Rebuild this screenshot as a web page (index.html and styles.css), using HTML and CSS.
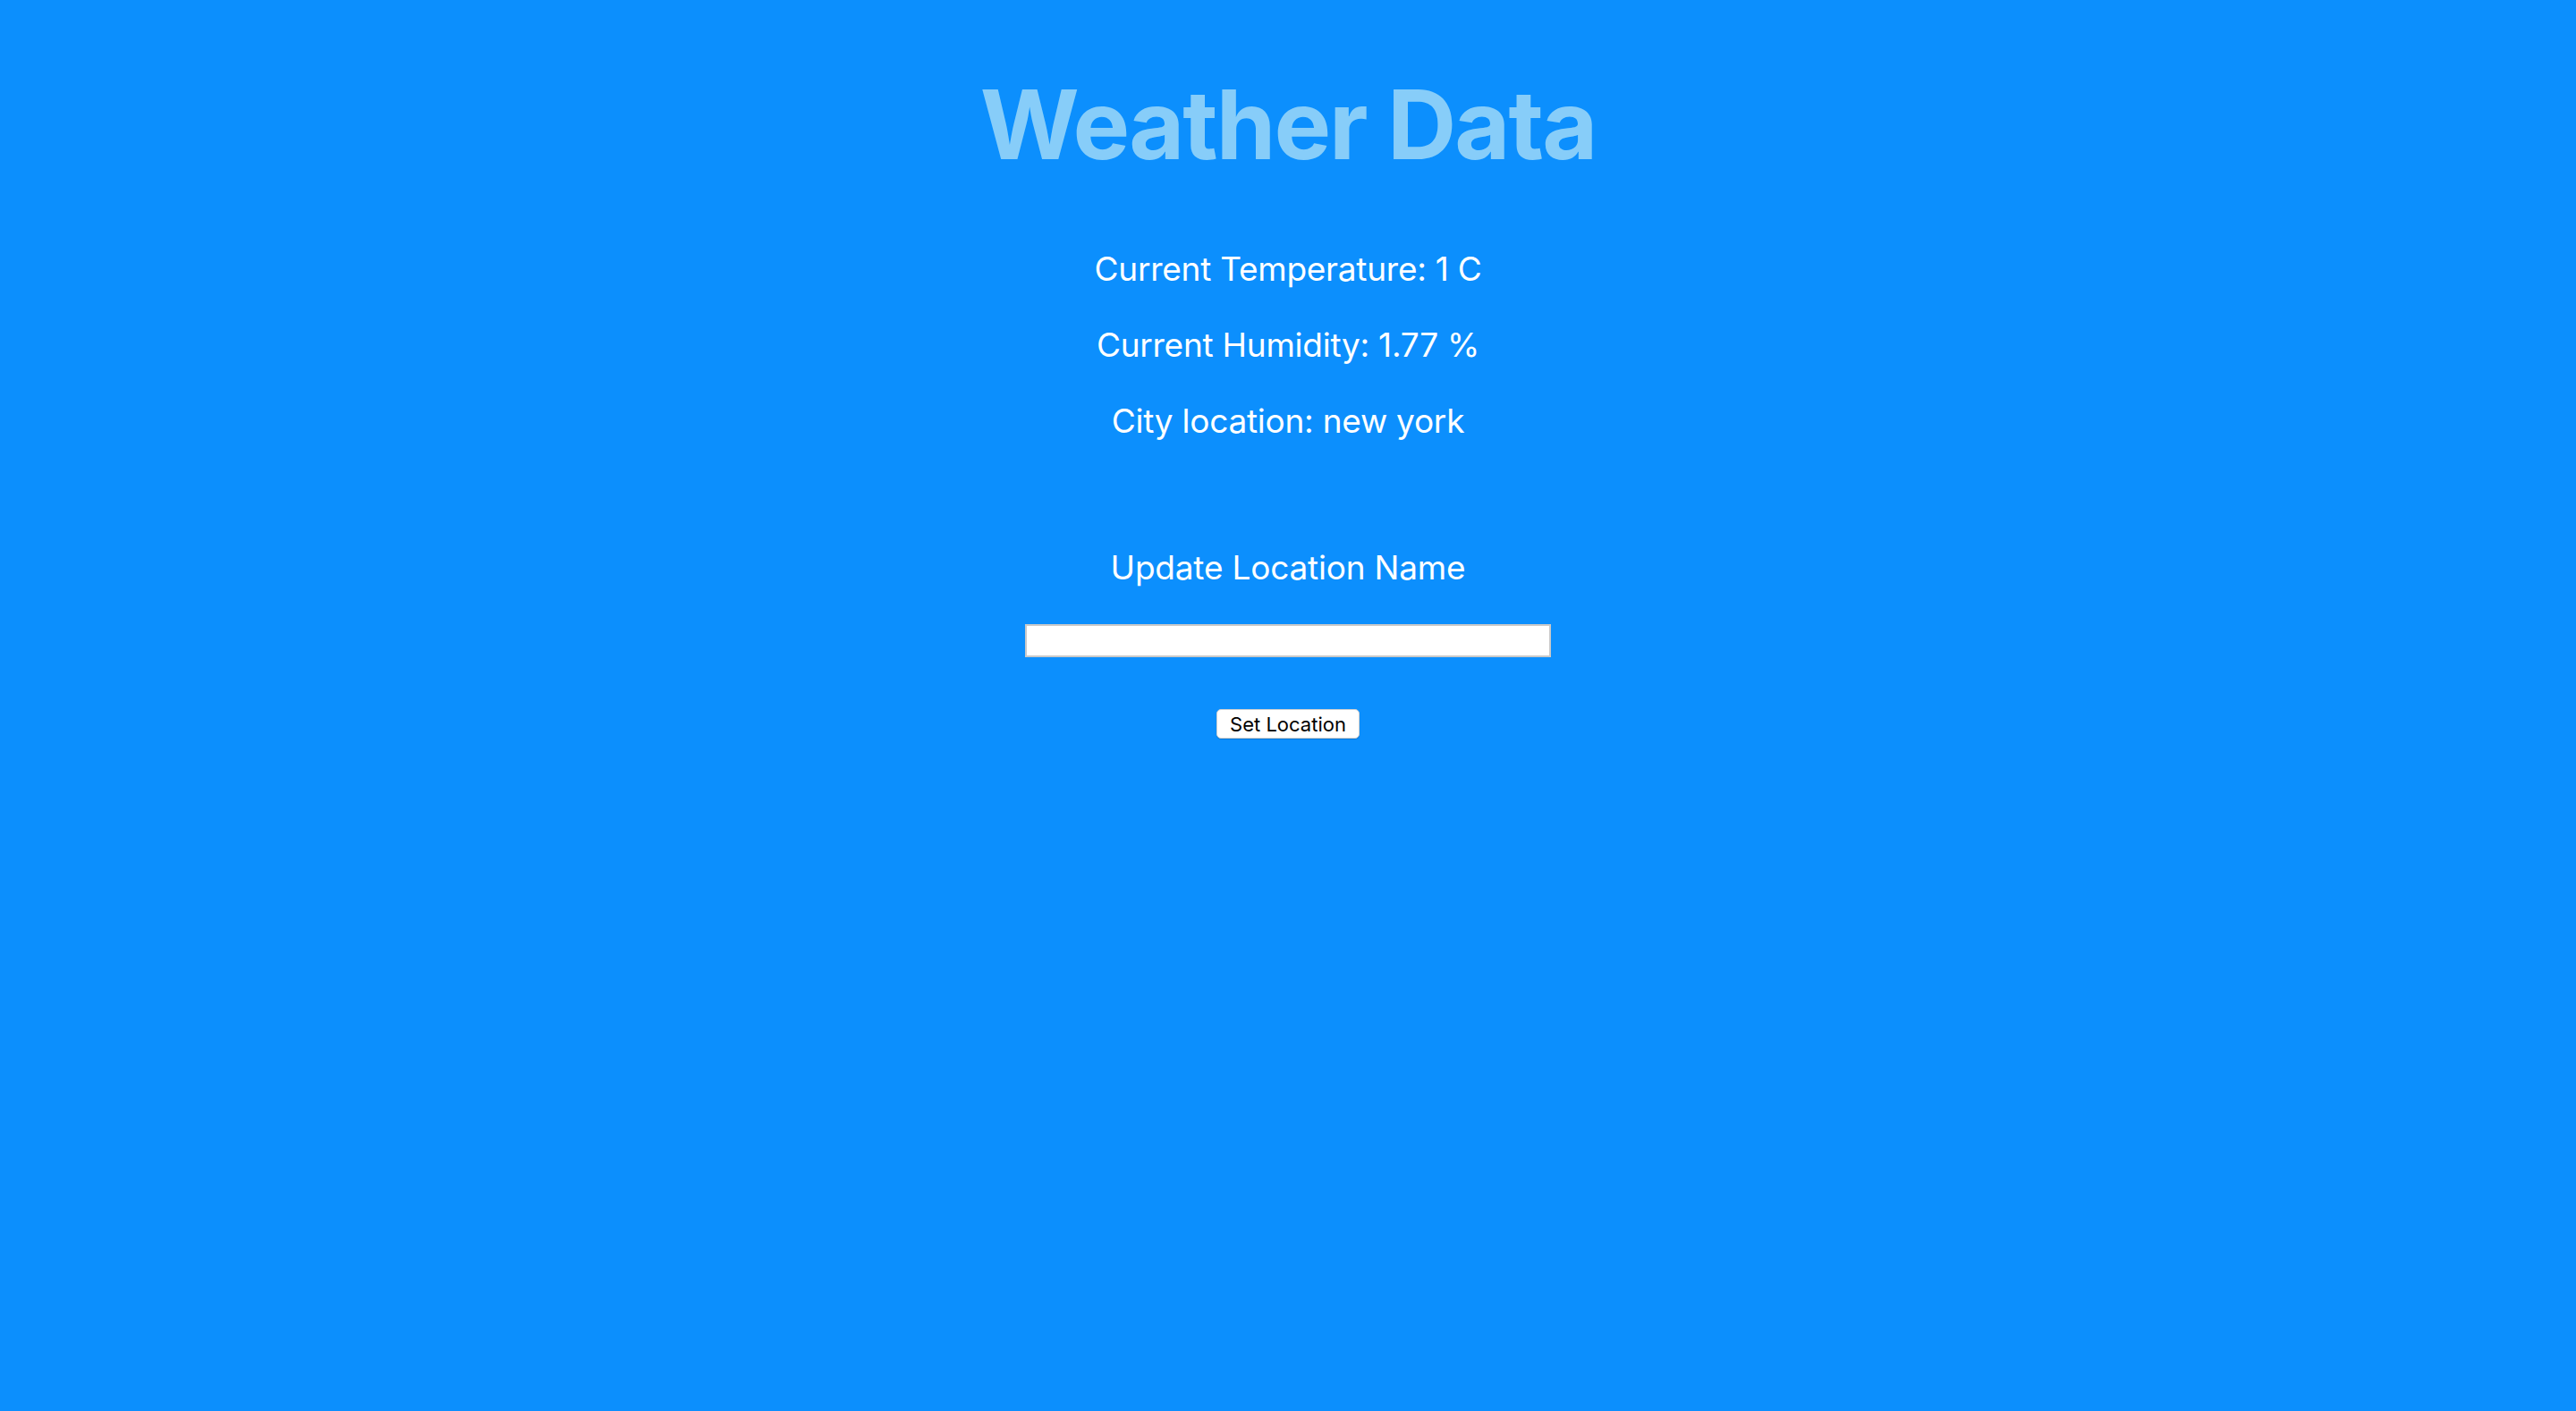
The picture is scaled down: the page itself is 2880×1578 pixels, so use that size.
FILE: index.html
```html
<!DOCTYPE html>
<html lang="en">
<head>
<meta charset="utf-8">
<title>Weather Data</title>
<link rel="stylesheet" href="styles.css">
</head>
<body>
<main class="page">
  <h1 class="title">Weather Data</h1>
  <p class="reading reading-first">Current Temperature: 1 C</p>
  <p class="reading">Current Humidity: 1.77 %</p>
  <p class="reading">City location: new york</p>
  <h2 class="update-title">Update Location Name</h2>
  <input class="location-input" type="text" aria-label="Location name">
  <button class="set-button" type="button">Set Location</button>
</main>
</body>
</html>
```
FILE: styles.css
```css
html, body {
  margin: 0;
  padding: 0;
  background: #0c8ffd;
  min-height: 100%;
}
body {
  min-height: 1578px;
  font-family: Inter, "Noto Sans", sans-serif;
  color: #ffffff;
}
.page {
  display: flex;
  flex-direction: column;
  align-items: center;
  padding-top: 86px;
}
.title {
  margin: 0;
  font-size: 107px;
  line-height: 1;
  font-weight: 700;
  letter-spacing: -2px;
  color: #87cdf9;
}
.reading {
  margin: 48px 0 0;
  font-size: 37px;
  line-height: 1;
  font-weight: 400;
  letter-spacing: -0.25px;
}
.reading-first {
  margin-top: 89px;
}
.update-title {
  margin: 127px 0 0;
  font-size: 37px;
  line-height: 1;
  font-weight: 400;
  letter-spacing: -0.2px;
}
.location-input {
  margin-top: 45px;
  box-sizing: border-box;
  width: 588px;
  height: 37px;
  border: 2px solid #c9c9c9;
  background: #ffffff;
  padding: 0 6px;
  font-size: 22px;
  font-family: Inter, sans-serif;
  outline: none;
}
.set-button {
  margin-top: 58px;
  box-sizing: border-box;
  width: 160px;
  height: 33px;
  border: 1px solid #d0d0d0;
  border-radius: 5px;
  background: #ffffff;
  color: #000000;
  font-family: Inter, sans-serif;
  font-size: 22px;
  line-height: 1;
  padding: 0;
  box-shadow: 0 1px 1px rgba(0, 0, 0, 0.15);
}
```
